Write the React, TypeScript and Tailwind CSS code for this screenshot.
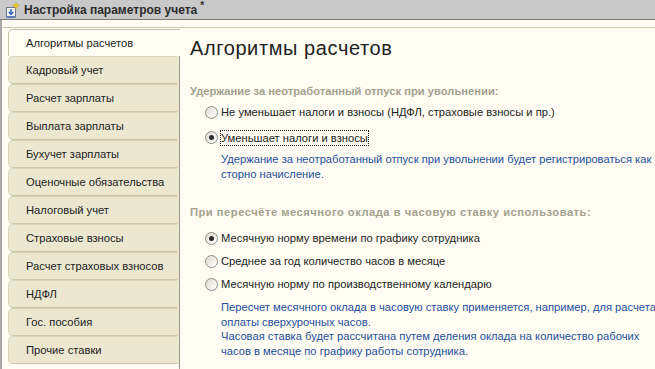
import React from "react";

const tabs = [
  "Алгоритмы расчетов",
  "Кадровый учет",
  "Расчет зарплаты",
  "Выплата зарплаты",
  "Бухучет зарплаты",
  "Оценочные обязательства",
  "Налоговый учет",
  "Страховые взносы",
  "Расчет страховых взносов",
  "НДФЛ",
  "Гос. пособия",
  "Прочие ставки",
];

function Radio({ checked, label, focused, tall }: { checked?: boolean; label: string; focused?: boolean; tall?: boolean }) {
  return (
    <div className={`flex items-center whitespace-nowrap ${tall ? "h-[25px]" : "h-[23px]"}`}>
      <span className="relative mr-[2px] flex h-[13px] w-[13px] shrink-0 items-center justify-center rounded-full border border-[#8d8d86] bg-gradient-to-br from-[#dedbd2] to-white">
        {checked && <span className="h-[5px] w-[5px] rounded-full bg-[#2a2a2a]" />}
      </span>
      <span className={focused ? "border border-dotted border-[#222] leading-[14px]" : "px-[1px]"}>{label}</span>
    </div>
  );
}

function DocIcon() {
  return (
    <svg width="16" height="16" viewBox="0 0 16 16" className="mx-[4px]">
      <rect x="2.5" y="5.5" width="9" height="9.5" fill="#f4f4f4" stroke="#6b7a8a" />
      <path d="M7 7v5M4.8 10l2.2 2.4L9.2 10" fill="none" stroke="#2c62b8" strokeWidth="1.4" />
      <path d="M3 15h8" stroke="#2c62b8" strokeWidth="1.2" />
      <path d="M12 0.5l0.9 2.3 2.3 0.9-2.3 0.9L12 7l-0.9-2.4-2.3-0.9 2.3-0.9z" fill="#f2d21a" stroke="#c9a400" strokeWidth="0.5" />
    </svg>
  );
}

export default function App() {
  return (
    <div
      className="flex h-[369px] w-[655px] flex-col overflow-hidden bg-[#fffdf3] text-[11.2px] text-[#1c1c1c]"
      style={{ fontFamily: '"Liberation Sans", Arial, sans-serif' }}
    >
      <div className="flex h-[20px] shrink-0 items-center border-b border-[#7a7a7a] bg-[#c9c9c9]">
        <DocIcon />
        <span className="text-[12px] font-bold text-[#2b2b2b]">Настройка параметров учета</span>
        <span className="ml-[3px] -mt-[8px] text-[10px] font-bold text-[#2b2b2b]">*</span>
      </div>
      <div className="flex flex-1 flex-col border-l-2 border-[#a8a8a8]">
        <div className="mt-[7px] border-t border-[#cfc8b0]" />
        <div className="flex flex-1">
          <div className="ml-[6px] flex w-[172px] shrink-0 flex-col pt-[1px]">
            {tabs.map((t, i) =>
              i === 0 ? (
                <div
                  key={t}
                  className="flex h-[27px] items-center whitespace-nowrap rounded-tl-[5px] border-l border-t border-[#c7c1a8] bg-[#fffdf3] pl-[17px]"
                >
                  {t}
                </div>
              ) : (
                <div key={t} className="flex h-[28px]">
                  <div className="flex flex-1 items-center whitespace-nowrap rounded-l-[5px] border-l border-t border-b border-[#d9d3ba] border-b-[#cbc4a8] bg-[#ebe7d1] pl-[17px]">
                    {t}
                  </div>
                  <div className="w-[3px] border-r border-[#9c9a90] bg-[#ebe7d1]" />
                </div>
              )
            )}
            <div className="flex flex-1 justify-end">
              <div className="w-[1px] bg-[#9c9a90]" />
            </div>
          </div>
          <div className="flex-1 whitespace-nowrap pl-[10px]">
            <div className="mt-[8px] text-[20px] leading-[24px] tracking-[0.6px] text-[#222]">Алгоритмы расчетов</div>
            <div className="mt-[24px] text-[11.2px] font-bold leading-[14px] text-[#a3a18d]">
              Удержание за неотработанный отпуск при увольнении:
            </div>
            <div className="mt-[2px] pl-[15px]">
              <Radio tall label="Не уменьшает налоги и взносы (НДФЛ, страховые взносы и пр.)" />
              <Radio tall checked focused label="Уменьшает налоги и взносы" />
              <div className="mt-[2px] pl-[16px] leading-[15px] text-[#244f9c]">
                Удержание за неотработанный отпуск при увольнении будет регистрироваться как
                <br />
                сторно начисление.
              </div>
            </div>
            <div className="mt-[23px] text-[11.2px] font-bold leading-[14px] tracking-[0.5px] text-[#a3a18d]">
              При пересчёте месячного оклада в часовую ставку использовать:
            </div>
            <div className="mt-[8px] pl-[15px]">
              <Radio checked label="Месячную норму времени по графику сотрудника" />
              <Radio label="Среднее за год количество часов в месяце" />
              <Radio label="Месячную норму по производственному календарю" />
              <div className="mt-[4px] pl-[16px] leading-[14.7px] text-[#244f9c]">
                Пересчет месячного оклада в часовую ставку применяется, например, для расчета
                <br />
                оплаты сверхурочных часов.
                <br />
                Часовая ставка будет рассчитана путем деления оклада на количество рабочих
                <br />
                часов в месяце по графику работы сотрудника.
              </div>
            </div>
          </div>
        </div>
      </div>
    </div>
  );
}
